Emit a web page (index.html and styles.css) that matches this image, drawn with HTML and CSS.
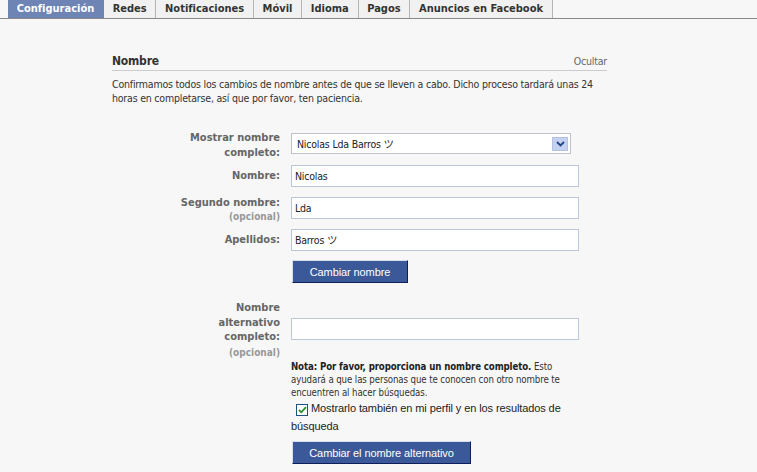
FILE: index.html
```html
<!DOCTYPE html>
<html lang="es">
<head>
<meta charset="utf-8">
<title>Configuración</title>
<link rel="stylesheet" href="styles.css">
</head>
<body>
<div class="tabs">
  <a class="tab active">Configuración</a>
  <a class="tab">Redes</a>
  <a class="tab">Notificaciones</a>
  <a class="tab">Móvil</a>
  <a class="tab">Idioma</a>
  <a class="tab">Pagos</a>
  <a class="tab">Anuncios en Facebook</a>
</div>
<div class="content">
  <div class="section-head">
    <h2 class="section-title">Nombre</h2>
    <a class="hide-link">Ocultar</a>
  </div>
  <p class="desc">Confirmamos todos los cambios de nombre antes de que se lleven a cabo. Dicho proceso tardará unas 24 horas en completarse, así que por favor, ten paciencia.</p>

  <div class="row row-display">
    <div class="label">Mostrar nombre completo:</div>
    <div class="field">
      <div class="select">
        <span class="select-text">Nicolas Lda Barros ツ</span>
        <span class="select-btn"><svg width="9" height="6" viewBox="0 0 9 6"><path d="M1 1 L4.5 4.5 L8 1" fill="none" stroke="#24418a" stroke-width="1.8"/></svg></span>
      </div>
    </div>
  </div>
  <div class="row row-first">
    <div class="label">Nombre:</div>
    <div class="field"><div class="input">Nicolas</div></div>
  </div>
  <div class="row row-middle">
    <div class="label">Segundo nombre:<span class="opt">(opcional)</span></div>
    <div class="field"><div class="input">Lda</div></div>
  </div>
  <div class="row row-last">
    <div class="label">Apellidos:</div>
    <div class="field"><div class="input">Barros ツ</div></div>
  </div>
  <div class="row row-btn">
    <div class="label"></div>
    <div class="field"><button class="btn btn-1">Cambiar nombre</button></div>
  </div>

  <div class="row row-alt">
    <div class="label alt-label">Nombre alternativo completo:<span class="opt">(opcional)</span></div>
    <div class="field"><div class="input input-empty"></div></div>
  </div>
  <div class="row row-note">
    <div class="label"></div>
    <div class="field">
      <p class="note"><b>Nota: Por favor, proporciona un nombre completo.</b> Esto ayudará a que las personas que te conocen con otro nombre te encuentren al hacer búsquedas.</p>
      <p class="check-line"><span class="checkbox"><svg width="9" height="8" viewBox="0 0 9 8"><path d="M1 4 L3.3 6.3 L8 1.2" fill="none" stroke="#2a8c2a" stroke-width="1.8"/></svg></span>Mostrarlo también en mi perfil y en los resultados de búsqueda</p>
      <button class="btn btn-2">Cambiar el nombre alternativo</button>
    </div>
  </div>
</div>
</body>
</html>
```
FILE: styles.css
```css
html, body {
  margin: 0;
  padding: 0;
}
body {
  background: #f7f7f7;
  font-family: Tahoma, "DejaVu Sans Condensed", "Liberation Sans", "Noto Sans CJK JP", sans-serif;
  font-size: 10.5px;
  letter-spacing: -0.2px;
  color: #333;
  width: 757px;
  height: 472px;
  overflow: hidden;
}
.tabs {
  display: flex;
  padding-left: 8px;
  border-bottom: 1px solid #898989;
  height: 18px;
}
.tab {
  display: block;
  height: 18px;
  line-height: 18px;
  padding: 0 8.7px;
  font-weight: bold;
  font-size: 11px;
  letter-spacing: 0;
  color: #333;
  background: #f1f1f1;
  border-right: 1px solid #b5b5b5;
  box-sizing: border-box;
}
.tab.active {
  background: #6d84b4;
  color: #fff;
  border-right-color: #6d84b4;
}
.content {
  width: 495px;
  margin-left: 112px;
  padding-top: 34px;
}
.section-head {
  display: flex;
  justify-content: space-between;
  align-items: flex-end;
  border-bottom: 1px solid #cccccc;
  padding-bottom: 1px;
}
.section-title {
  margin: 0;
  font-size: 12px;
  letter-spacing: -0.2px;
  line-height: 16px;
  font-weight: bold;
  color: #333;
}
.hide-link {
  color: #666;
  line-height: 16px;
}
.desc {
  margin: 6px 0 0;
  line-height: 14px;
}
.row {
  display: flex;
  gap: 11px;
}
.label {
  width: 102px;
  margin-left: 66px;
  flex: none;
  text-align: right;
  font-weight: bold;
  font-size: 11px;
  letter-spacing: 0;
  color: #666;
  line-height: 15px;
}
.opt {
  display: block;
  font-size: 10px;
  color: #999;
  line-height: 14px;
}
.field {
  flex: none;
  width: 288px;
}
.row-display {
  margin-top: 25px;
}
.select {
  margin-top: 3px;
  width: 280px;
  height: 21px;
  box-sizing: border-box;
  border: 1px solid #bdc2cc;
  background: #fff;
  display: flex;
  align-items: center;
  justify-content: space-between;
  padding: 0 2px 0 5px;
}
.select-text {
  color: #222;
}
.select-btn {
  width: 16px;
  height: 14px;
  background: #c5d2ef;
  border: 1px solid #b4c3e3;
  box-sizing: border-box;
  display: flex;
  align-items: center;
  justify-content: center;
}
.input {
  height: 22px;
  box-sizing: border-box;
  border: 1px solid #bdc7d8;
  background: #fff;
  padding: 0 3px;
  line-height: 20px;
  color: #222;
}
.row-first {
  margin-top: 5px;
}
.row-first .label { padding-top: 3px; }
.row-middle {
  margin-top: 8px;
}
.row-middle .field { padding-top: 2px; }
.row-last {
  margin-top: 5px;
}
.row-last .label { padding-top: 3px; }
.btn {
  font-family: "Liberation Sans", Arial, sans-serif;
  font-size: 11px;
  letter-spacing: -0.1px;
  color: #fff;
  background: #3b5998;
  border: 1px solid;
  border-color: #d9dfea #0e1f5b #0e1f5b #d9dfea;
  height: 23px;
  padding: 0;
  margin: 0;
  display: block;
}
.row-btn { margin-top: 9px; }
.btn-1 {
  width: 116px;
  margin-left: 1px;
}
.row-alt {
  margin-top: 18px;
}
.alt-label {
  width: 66px;
  margin-left: 102px;
  line-height: 14.5px;
}
.alt-label .opt { margin-top: 1.5px; }
.row-alt .field { padding-top: 17px; }
.input-empty { height: 22px; }
.note {
  margin: 0;
  font-size: 9.6px;
  letter-spacing: -0.1px;
  line-height: 13px;
  color: #333;
}
.note b { color: #222; }
.check-line {
  margin: 0;
  font-family: "Liberation Sans", Arial, sans-serif;
  font-size: 11px;
  letter-spacing: -0.1px;
  line-height: 18px;
  color: #222;
}
.checkbox {
  display: inline-flex;
  align-items: center;
  justify-content: center;
  width: 12px;
  height: 12px;
  box-sizing: border-box;
  border: 1px solid #1c5180;
  background: #fff;
  margin: 0 3px 0 5px;
  vertical-align: -2px;
}
.btn-2 {
  width: 179px;
  margin: 6px 0 0 1px;
}
```
